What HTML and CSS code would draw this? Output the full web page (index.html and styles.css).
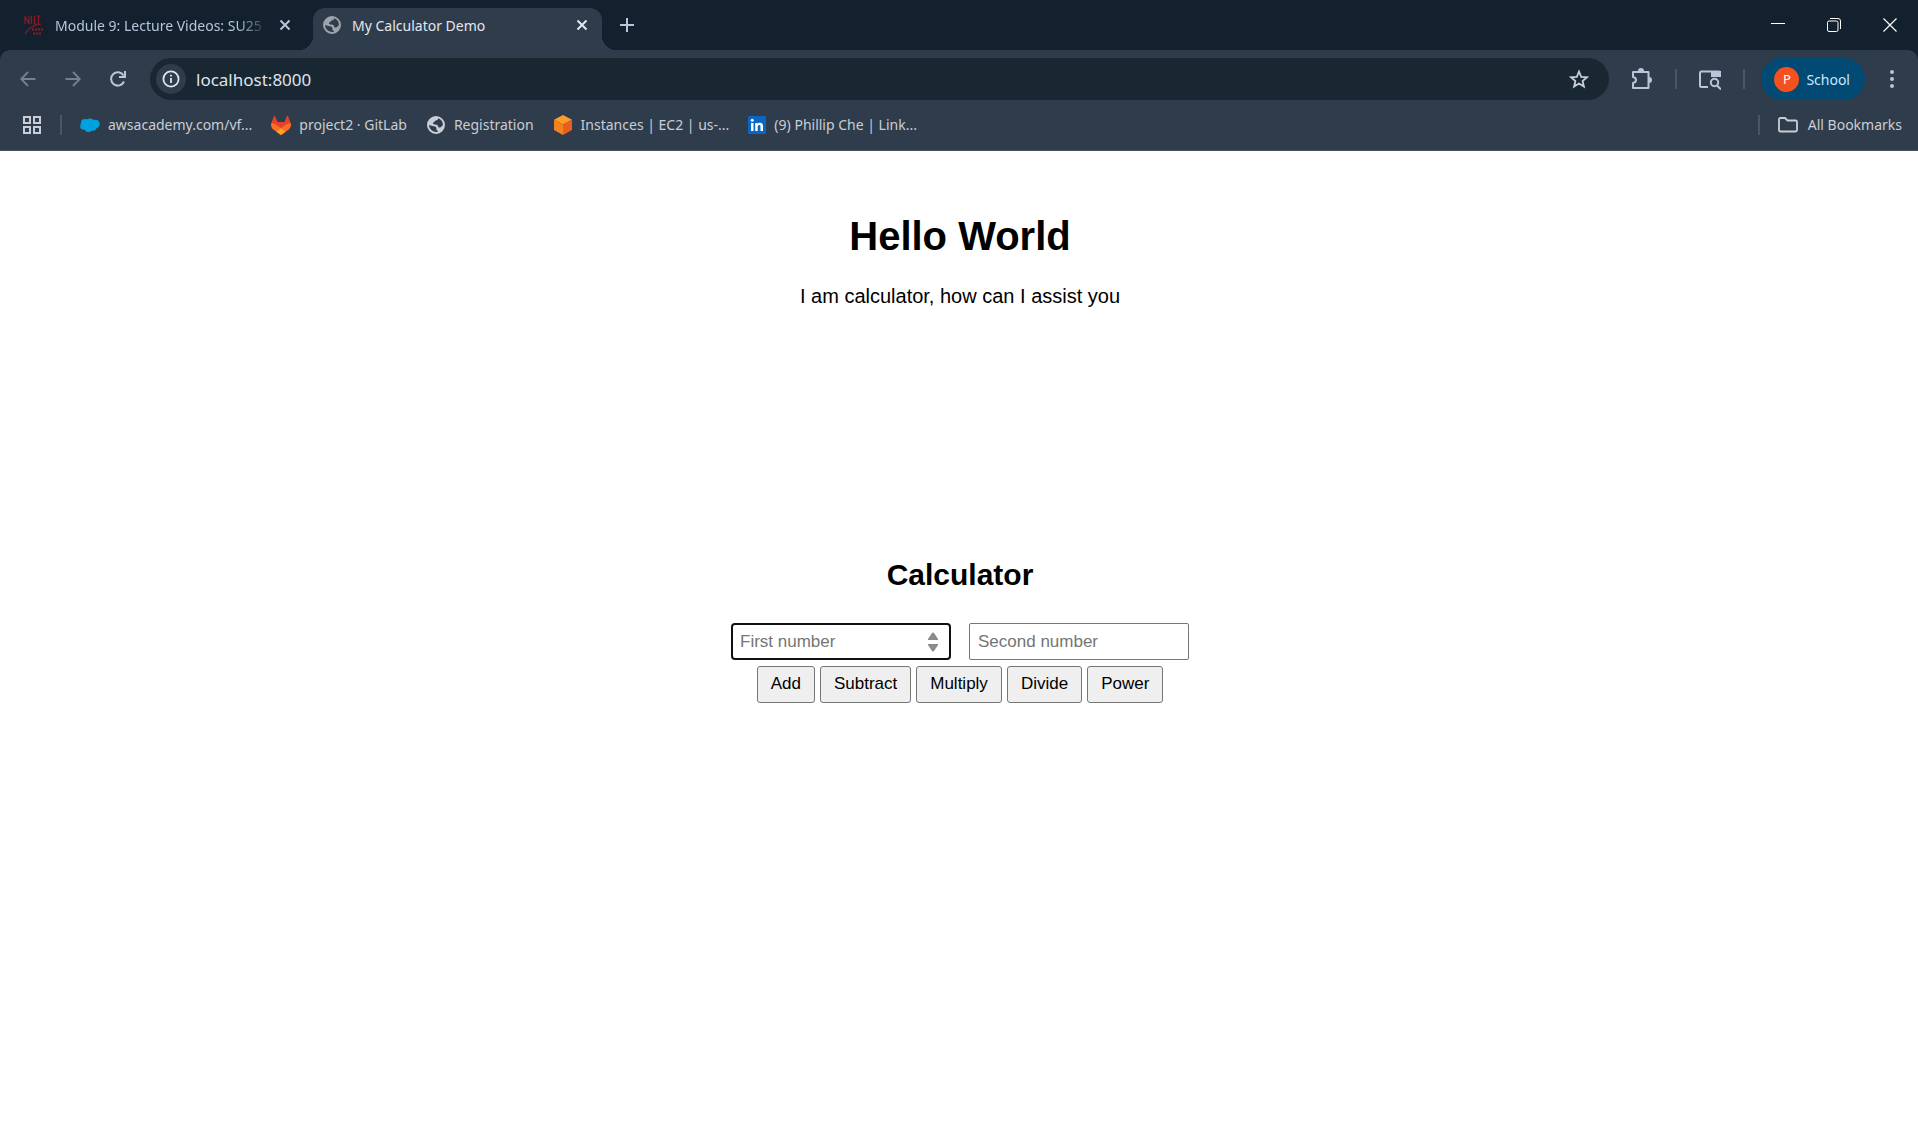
FILE: index.html
```html
<!DOCTYPE html>
<html lang="en">
<head>
<meta charset="utf-8">
<title>My Calculator Demo</title>
<link rel="stylesheet" href="styles.css">
</head>
<body>
<svg class="defs" aria-hidden="true">
  <symbol id="close" viewBox="0 0 12 12"><path d="M1.500 1.500l9 9M10.500 1.500l-9 9" fill="none" stroke="currentColor" stroke-width="2"/></symbol>
  <symbol id="globe" viewBox="0 0 18 18"><path fill="currentColor" fill-rule="evenodd" d="M9 0a9 9 0 1 0 0 18A9 9 0 0 0 9 0zM11 2.300c0 1.400-.8 2.200-2.200 2.300-1.200 0-.8 1.400-1.900 1.600-1 .2-1.300 1.200-.5 1.800 1.200.8 3.200.2 4.200 1.200.8.900.2 2 1.400 2.300 1.600.3 2.600-1 3.900-2.600A7 7 0 0 0 11 2.300zM2 9a7 7 0 0 0 9 6.700c-.2-1.200-1.300-1.300-1.600-2.300-.2-1.200.4-1.800-.9-2.600C6.500 9.600 4.500 10.200 2 9z"/></symbol>
</svg>

<header class="browser">
  <div class="tabs">
    <div class="tab tab-first">
      <svg class="favicon" viewBox="0 0 20 20" fill="none" stroke="#8e1a24" stroke-width="1.200"><path d="M1 9V1l4 8V1M7.500 1v8M10.500 1v8h2M14.500 1v8M12.500 1h4M1 19C4 13 9 10 17 9"/><path stroke-width="2" stroke-dasharray="2 1" d="M8 14.500h12M9 18.500h8"/></svg>
      <span class="tab-title faded">Module 9: Lecture Videos: SU25</span>
      <button class="tab-close" aria-label="Close tab"><svg width="12" height="12"><use href="#close"/></svg></button>
    </div>
    <div class="tab tab-active">
      <svg class="favicon-globe" width="18" height="18"><use href="#globe"/></svg>
      <span class="tab-title">My Calculator Demo</span>
      <button class="tab-close" aria-label="Close tab"><svg width="12" height="12"><use href="#close"/></svg></button>
    </div>
    <button class="new-tab" aria-label="New tab"><svg width="14" height="14" viewBox="0 0 14 14"><path d="M7 0v14M0 7h14" stroke="currentColor" stroke-width="2"/></svg></button>
    <div class="window-controls">
      <button aria-label="Minimize"><svg width="14" height="14" viewBox="0 0 14 14"><path d="M0 5.500h14" stroke="currentColor"/></svg></button>
      <button aria-label="Restore"><svg width="14" height="14" viewBox="0 0 14 14" fill="none" stroke="currentColor"><path d="M3 .5h8A2.500 2.500 0 0 1 13.500 3v8"/><rect x=".5" y="3" width="10.500" height="10.500" rx="1.500"/></svg></button>
      <button aria-label="Close"><svg width="14" height="14" viewBox="0 0 14 14"><path d="M.5.5l13 13M13.500.5l-13 13" stroke="currentColor" stroke-width="1.200"/></svg></button>
    </div>
  </div>

  <div class="toolbar">
    <button class="nav dim" aria-label="Back"><svg width="16" height="16" viewBox="0 0 16 16" fill="none" stroke="currentColor" stroke-width="1.800"><path d="M15.500 8H1.500M8 1L1.200 8 8 15"/></svg></button>
    <button class="nav dim" aria-label="Forward"><svg width="16" height="16" viewBox="0 0 16 16" fill="none" stroke="currentColor" stroke-width="1.800"><path d="M.5 8h14M8 1l6.800 7L8 15"/></svg></button>
    <button class="nav" aria-label="Reload"><svg width="16" height="16" viewBox="0 0 16 16" fill="none" stroke="currentColor" stroke-width="2"><path d="M14 10.500A6.700 6.700 0 1 1 13.600 4.500M15 0v6H9"/></svg></button>
    <div class="omnibox">
      <button class="site-info" aria-label="Site information"><svg width="18" height="18" viewBox="0 0 18 18" fill="none" stroke="currentColor" stroke-width="1.800"><circle cx="9" cy="9" r="7.600"/><path d="M9 8v5M9 4.800v1.800"/></svg></button>
      <input class="url" aria-label="Address" value="localhost:8000">
      <button class="star" aria-label="Bookmark this page"><svg width="20" height="20" viewBox="0 0 20 20" fill="none" stroke="currentColor" stroke-width="1.800"><path d="M10 2.500l2.200 5.300 5.700.5-4.300 3.700 1.300 5.600-4.900-3-4.900 3 1.300-5.600L2.100 8.300l5.700-.5z"/></svg></button>
    </div>
    <button class="tool" aria-label="Extensions"><svg width="22" height="22" viewBox="0 0 22 22"><path fill="none" stroke="currentColor" stroke-width="2" stroke-linejoin="round" d="M2 4h15.500v16H2v-5c4-.5 4-5.500 0-6z"/><path fill="currentColor" d="M7 3a3 3 0 0 1 6 0zM18 9a3 3 0 0 1 0 6z"/></svg></button>
    <span class="divider"></span>
    <button class="tool" aria-label="Search tabs"><svg width="22" height="22" viewBox="0 0 22 22" fill="none" stroke="currentColor" stroke-width="2"><path d="M9 19H2.500A1.500 1.500 0 0 1 1 17.500V5a1.500 1.500 0 0 1 1.500-1.500H20a1 1 0 0 1 1 1V8"/><path fill="currentColor" stroke="none" d="M12 3h10v6H12z"/><circle cx="15.500" cy="14.500" r="3.700"/><path d="M18 17.500l4 4"/></svg></button>
    <span class="divider"></span>
    <button class="profile"><span class="avatar">P</span>School</button>
    <button class="menu" aria-label="Menu"><svg width="4" height="18" viewBox="0 0 4 18" fill="currentColor"><circle cx="2" cy="2" r="2"/><circle cx="2" cy="9" r="2"/><circle cx="2" cy="16" r="2"/></svg></button>
  </div>

  <nav class="bookmarks" aria-label="Bookmarks">
    <button class="apps" aria-label="Apps"><svg width="18" height="18" viewBox="0 0 18 18" fill="none" stroke="currentColor" stroke-width="2"><path d="M1 1h6v6H1zM11 1h6v6h-6zM1 11h6v6H1zM11 11h6v6h-6z"/></svg></button>
    <span class="divider"></span>
    <a class="bookmark" href="#"><svg width="20" height="20" viewBox="0 0 20 20" fill="#00a1e0"><circle cx="5" cy="8" r="4"/><circle cx="10" cy="7.500" r="4"/><circle cx="15.500" cy="9" r="4.300"/><circle cx="4" cy="11" r="3.800"/><circle cx="8.500" cy="13" r="4"/><circle cx="13" cy="12" r="3.700"/></svg>awsacademy.com/vf...</a>
    <a class="bookmark" href="#"><svg width="20" height="20" viewBox="0 0 20 20"><path fill="#e24329" d="M4 1l2.500 6h7L16 1q.5-.6 1 0l2.600 7c.8 2.300 0 5-2 6.500L10 20l-7.600-5.500C.4 13 -.4 10.300.4 8L3 1q.5-.6 1 0z"/><path fill="#fc6d26" d="M19.600 8c-2.500.5-4.800 1.600-6.600 3l-3 2.200L7 11C5.200 9.600 2.900 8.500.4 8c-.8 2.300 0 5 2 6.500L10 20l7.600-5.500c2-1.500 2.800-4.200 2-6.500z"/><path fill="#fca326" d="M10 13.200L5.500 16.700 10 20l4.500-3.300z"/></svg>project2 · GitLab</a>
    <a class="bookmark" href="#"><svg width="20" height="18"><use href="#globe"/></svg>Registration</a>
    <a class="bookmark" href="#"><svg width="20" height="20" viewBox="0 0 20 20"><path fill="#ff9d28" d="M10 0l9 4.800L10 9.500 1 4.800z"/><path fill="#f58220" d="M1 4.800l9 4.700V20l-9-5z"/><path fill="#e8601c" d="M19 4.800L10 9.500V20l9-5z"/></svg>Instances | EC2 | us-...</a>
    <a class="bookmark" href="#"><svg width="18" height="18" viewBox="0 0 18 18"><rect width="18" height="18" rx="1" fill="#0a66c2"/><path fill="#fff" d="M3 7h2.500v8H3zM7.200 7h2.300v1.100C10 7.300 10.800 6.800 12 6.800c2.400 0 3 1.500 3 3.800V15h-2.500v-4c0-1.200-.3-2-1.300-2s-1.500.8-1.500 2v4H7.200z"/><circle cx="4.200" cy="4.300" r="1.500" fill="#fff"/></svg>(9) Phillip Che | Link...</a>
    <span class="divider push"></span>
    <a class="bookmark all" href="#"><svg width="20" height="16" viewBox="0 0 20 16" fill="none" stroke="currentColor" stroke-width="1.800"><path d="M1 2.500Q1 1 2.500 1H7l2.500 2.500h8Q19 3.500 19 5v8q0 1.500-1.500 1.500h-15Q1 14.500 1 13z"/></svg>All Bookmarks</a>
  </nav>
</header>

<main class="page">
  <section class="hero">
    <h1>Hello World</h1>
    <p>I am calculator, how can I assist you</p>
  </section>
  <section class="calculator">
    <h2>Calculator</h2>
    <form>
      <div class="fields">
        <span class="field focused">
          <input class="number" type="text" inputmode="decimal" aria-label="First number" placeholder="First number">
          <svg class="spin" width="10" height="20" viewBox="0 0 10 20" fill="#8b8b8b"><path d="M4 1q1-1 2 0l4 6v1H0V7zM0 12h10v1l-4 6q-1 1-2 0l-4-6z"/></svg>
        </span>
        <span class="field"><input class="number" type="text" inputmode="decimal" aria-label="Second number" placeholder="Second number"></span>
      </div>
      <div class="operations">
        <button type="button">Add</button>
        <button type="button">Subtract</button>
        <button type="button">Multiply</button>
        <button type="button">Divide</button>
        <button type="button">Power</button>
      </div>
    </form>
  </section>
</main>
</body>
</html>
```
FILE: styles.css
```css
* { box-sizing: border-box; }

body {
  margin: 0;
  background: #fff;
  color: #000;
  font-family: "Liberation Sans", Arial, sans-serif;
}

button, input { font: inherit; color: inherit; }
svg { display: block; flex: none; }
.defs { position: absolute; width: 0; height: 0; }

/* Browser chrome */
.browser {
  background: #12212d;
  color: #c3cbd8;
  font-family: "Segoe UI", "Noto Sans", sans-serif;
  font-size: 14px;
}
.browser button {
  display: flex;
  align-items: center;
  justify-content: center;
  flex: none;
  padding: 0;
  border: 0;
  background: none;
}

.tabs {
  display: flex;
  height: 50px;
  padding-left: 12px;
}
.tab {
  display: flex;
  align-items: center;
  gap: 11px;
  height: 42px;
  margin-top: 8px;
  padding: 0 14px 8px 12px;
}
.tab-first { width: 301px; padding-right: 22px; color: #b8c5da; }
.favicon { width: 20px; height: 20px; }
.tab-active {
  position: relative;
  width: 289px;
  padding-left: 10px;
  border-radius: 12px 12px 0 0;
  background: #2f3c4b;
  color: #e3e7ee;
}
.tab-active::before, .tab-active::after {
  content: "";
  position: absolute;
  bottom: 0;
  width: 14px;
  height: 14px;
}
.tab-active::before { right: 100%; background: radial-gradient(circle at 0 0, transparent 14px, #2f3c4b 14px); }
.tab-active::after { left: 100%; background: radial-gradient(circle at 100% 0, transparent 14px, #2f3c4b 14px); }
.favicon-globe { color: #9da3ab; }
.tab-title {
  flex: 1;
  overflow: hidden;
  white-space: nowrap;
}
.faded { mask-image: linear-gradient(to right, #000 86%, transparent); }
.new-tab { width: 50px; color: #b8c5da; }
.window-controls { display: flex; margin-left: auto; color: #fff; }
.window-controls button { width: 56px; }

.toolbar {
  display: flex;
  align-items: center;
  height: 58px;
  padding: 0 9px 0 5px;
  border-radius: 10px 10px 0 0;
  background: #2f3c4b;
  color: #b8c5da;
}
.browser .nav { width: 45px; height: 40px; }
.browser .dim { color: #738090; }
.omnibox {
  display: flex;
  flex: 1;
  align-items: center;
  height: 42px;
  margin: 0 16px 0 10px;
  padding: 0 20px 0 6px;
  border-radius: 21px;
  background: #192732;
}
.omnibox .site-info {
  width: 30px;
  height: 30px;
  border-radius: 50%;
  background: #2f3c4b;
  color: #dfe4ec;
}
.url {
  flex: 1;
  min-width: 0;
  padding: 0 10px;
  border: 0;
  outline: 0;
  background: none;
  color: #dfe3ea;
  font-size: 17px;
}
.star { color: #c9ced6; }
.browser .tool { width: 34px; height: 34px; }
.divider {
  flex: none;
  width: 2px;
  height: 20px;
  margin: 0 16px;
  background: #485767;
}
.browser .profile {
  height: 42px;
  gap: 7px;
  padding: 0 15px 0 13px;
  border-radius: 21px;
  background: #004a74;
  color: #cbe6ff;
}
.avatar {
  width: 25px;
  height: 25px;
  border-radius: 50%;
  background: #f4511e;
  color: #fff;
  font-size: 13px;
  line-height: 25px;
  text-align: center;
}
.browser .menu { width: 34px; margin-left: 10px; }

.bookmarks {
  display: flex;
  align-items: center;
  height: 43px;
  padding: 0 16px 9px 23px;
  border-bottom: 1px solid #4b535d;
  background: #2f3c4b;
  color: #c9ced6;
}
.bookmarks .divider { margin: 0 18px 0 19px; }
.bookmark {
  display: flex;
  align-items: center;
  gap: 8px;
  margin-right: 19px;
  color: inherit;
  text-decoration: none;
  white-space: nowrap;
}
.bookmarks .push { margin-left: auto; }
.bookmarks .all { gap: 10px; margin-right: 0; }

/* Calculator page */
.page { padding: 10px 10px 10px 12px; text-align: center; }
.hero { min-height: 340px; padding-top: 52px; }
h1 { margin: 0 0 25px; font-size: 40px; line-height: 46px; }
p { margin: 0; font-size: 20px; line-height: 24px; }
.calculator { padding-top: 56px; }
h2 { margin: 0 0 30px; font-size: 30px; line-height: 36px; }
.fields { display: flex; justify-content: center; gap: 18px; }
.field {
  display: flex;
  align-items: center;
  width: 220px;
  height: 37px;
  padding: 0 8px;
  border: 1px solid #767676;
  border-radius: 2px;
}
.focused { padding: 0 11px 0 7px; border: 2px solid #101010; border-radius: 4px; }
.number {
  flex: 1;
  min-width: 0;
  padding: 0;
  border: 0;
  outline: 0;
  background: none;
  font-size: 17px;
}
.number::placeholder { color: #757575; }
.operations { display: flex; justify-content: center; gap: 5px; margin-top: 6px; }
.operations button {
  height: 37px;
  padding: 0 13px 2px;
  border: 1px solid #767676;
  border-radius: 3px;
  background: #efefef;
  color: #000;
  font-size: 17px;
}
```
